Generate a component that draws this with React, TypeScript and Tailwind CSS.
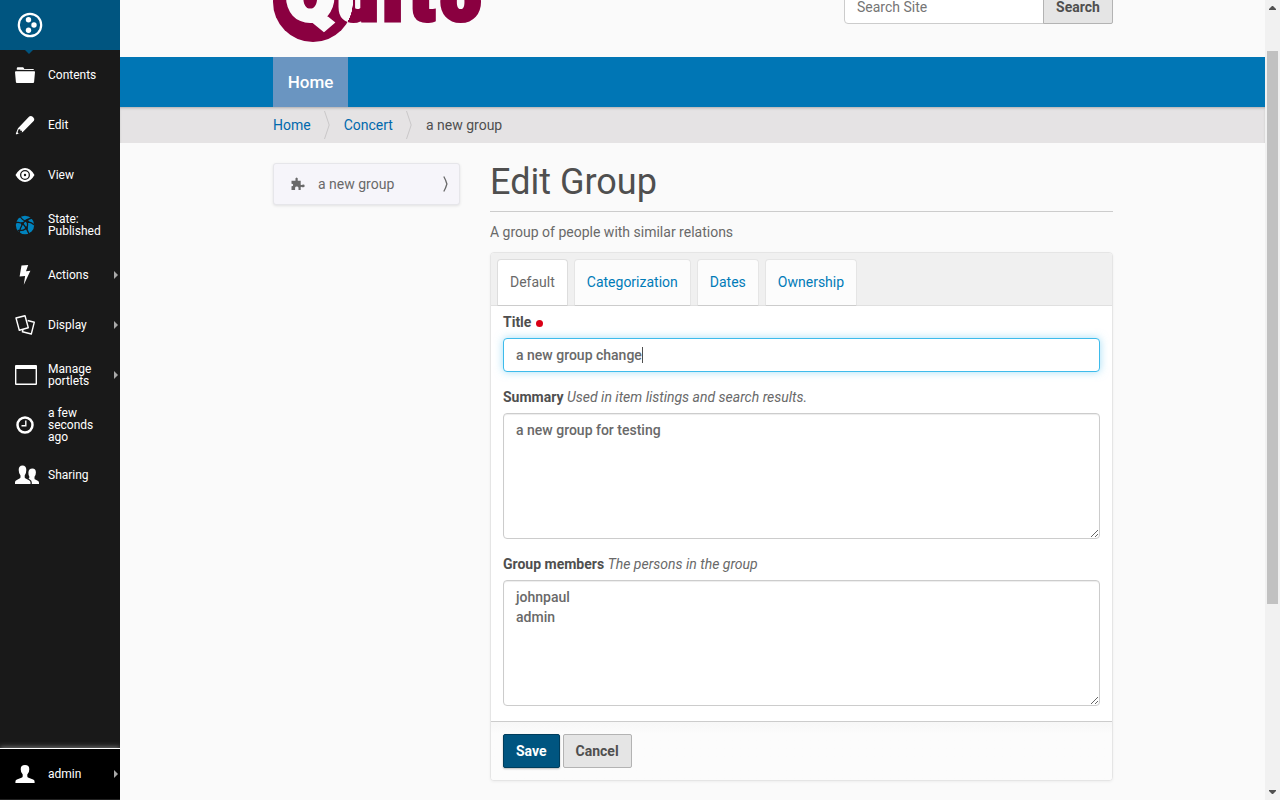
import React from "react";

type IconProps = { children: React.ReactNode; className?: string };

function Icon({ children, className = "text-white" }: IconProps) {
  return (
    <svg width="26" height="24" viewBox="0 0 26 24" fill="currentColor" className={"shrink-0 " + className} aria-hidden="true">
      {children}
    </svg>
  );
}

const FolderIcon = (
  <Icon>
    <path d="M1.800 6.800V5.200q0-1 1-1h5q.7 0 1 .7l.5 1h8.500q1.200 0 1.200 1z" />
    <path d="M1 8.200h18.200q.9 0 .8.900l-.9 9.900q-.1.900-1 .9H1.900q-.9 0-1-.9L0 9.100q0-.9 1-.9z" />
  </Icon>
);
const PencilIcon = (
  <Icon>
    <path fillRule="evenodd" d="M3 15.200 14.200 3.600q1.600-1.500 3.800.4 2.200 2 .9 3.700L7.800 19l-5.900 2.300Q.6 21.600.9 20.400zM3.700 16.300l-1.200 3 1.200 1.200 3.200-1.200.1-1.500-1.600-.1-.2-1.400z" />
  </Icon>
);
const EyeIcon = (
  <Icon>
    <path fillRule="evenodd" d="M.5 12Q4.500 5 10 5t9.500 7q-4 7-9.500 7T.5 12zM10 7a5 5 0 1 0 0 10a5 5 0 1 0 0-10z" />
    <path fillRule="evenodd" d="M10 8.300a3.700 3.700 0 1 0 0 7.400a3.700 3.700 0 1 0 0-7.400zm0 2.500a1.200 1.200 0 1 1 0 2.400a1.200 1.200 0 1 1 0-2.400z" />
  </Icon>
);
const GlobeIcon = (
  <Icon className="text-[#0083be]">
    <circle cx="10" cy="12" r="9.200" />
    <g fill="none" stroke="#191919" strokeWidth="1.300">
      <path d="M5 3Q7 7.500 12 8.500T19.500 12M.8 9.500Q6 8.500 9 12t5 9M17 5Q10 6.500 7.500 11T4 20M12 8.500Q13.500 13 11 15.500T3 17.500" />
    </g>
    <g fill="#191919">
      <circle cx="12.300" cy="8.300" r="1.500" />
      <circle cx="7.300" cy="10.500" r="1.500" />
      <circle cx="11.500" cy="15" r="1.500" />
    </g>
  </Icon>
);
const BoltIcon = (
  <Icon>
    <path d="m6.500 2.500 6.700-.4-2.200 6.200 4.400-.5-6.600 14 1.300-8.900-5.500.7z" />
  </Icon>
);
const DisplayIcon = (
  <Icon>
    <g fill="none" stroke="currentColor" strokeWidth="1.400" strokeLinejoin="round">
      <path d="m1 5 9-2.300 3.300 12.100-9 2.400z" />
      <path d="m12.600 7.500 6.700 1.700-3 11.800-8.900-2.200.6-2.500" />
    </g>
  </Icon>
);
const WindowIcon = (
  <Icon>
    <path fillRule="evenodd" d="M1 2h20q1 0 1 1v18q0 1-1 1H1q-1 0-1-1V3q0-1 1-1zm.4 4v14.600h19.200V6z" />
  </Icon>
);
const ClockIcon = (
  <Icon>
    <circle cx="10" cy="12" r="7.500" fill="none" stroke="currentColor" strokeWidth="2.500" />
    <path d="M10.800 7.500v5.300H6.500" fill="none" stroke="currentColor" strokeWidth="1.400" />
  </Icon>
);
const SharingIcon = (
  <Icon>
    <path d="M7.500 2.600q3.800 0 3.800 4.500 0 3.500-1.600 5.300v1.900q0 .8 1 1.300l3.300 1.600q1.500.7 1.500 2.300V21H0v-1.500q0-1.600 1.400-2.200l3.100-1.700q1-.5 1-1.300v-1.900Q3.700 10.600 3.700 7.100q0-4.500 3.800-4.500z" />
    <path d="M17.400 5.600q3.500 0 3.500 4 0 2.600-1.400 4.200v1.600q0 .7.800 1.100l2.400 1.200q1.300.6 1.300 2V21h-7.200v-1.600q0-2-1.900-3l-1.500-.8q.9-.3.900-1.200v-1q-1-1.600-.9-3.800.2-4 4-4z" />
  </Icon>
);
const UserIcon = (
  <Icon>
    <path d="M10 3q4.300 0 4.300 4.200 0 3.500-2 5.300v1.700q0 1 1.300 1.600l4.500 1.700q1.500.6 1.500 2.200V21H.4v-1.300q0-1.600 1.500-2.200l4.500-1.700q1.300-.6 1.300-1.600v-1.700q-2-1.800-2-5.300Q5.700 3 10 3z" />
  </Icon>
);

const toolbar = [
  { label: "Contents", icon: FolderIcon },
  { label: "Edit", icon: PencilIcon },
  { label: "View", icon: EyeIcon },
  { label: "State: Published", icon: GlobeIcon },
  { label: "Actions", icon: BoltIcon, more: true },
  { label: "Display", icon: DisplayIcon, more: true },
  { label: "Manage portlets", icon: WindowIcon, more: true },
  { label: "a few seconds ago", icon: ClockIcon },
  { label: "Sharing", icon: SharingIcon },
];

function ToolbarLink({ label, icon, more }: { label: string; icon: React.ReactNode; more?: boolean }) {
  return (
    <a href="#" className="flex h-[50px] items-center pl-[15px] pr-[2px] text-xs leading-3 text-white">
      {icon}
      <span className="ml-[7px] w-[58px]">{label}</span>
      {more && (
        <svg width="4" height="8" viewBox="0 0 4 8" className="ml-auto shrink-0" aria-hidden="true">
          <path d="M0 0l4 4-4 4z" fill="#a8a8a8" />
        </svg>
      )}
    </a>
  );
}

function Toolbar() {
  return (
    <aside className="sticky top-0 z-10 flex h-screen w-[120px] shrink-0 flex-col overflow-hidden bg-[#191919]">
      <a href="#" aria-label="Plone" className="relative flex h-[50px] items-center bg-[#005580] pl-[17px]">
        <svg width="26" height="26" viewBox="0 0 26 26" fill="white" aria-hidden="true">
          <circle cx="13" cy="13" r="11.200" fill="none" stroke="white" strokeWidth="2.200" />
          <circle cx="11.500" cy="7.700" r="2.700" />
          <circle cx="17" cy="13" r="2.700" />
          <circle cx="11.500" cy="18.300" r="2.700" />
        </svg>
        <svg width="8" height="4" viewBox="0 0 8 4" className="absolute left-[25px] top-full" aria-hidden="true">
          <path d="M0 0h8L4 4z" fill="#005580" />
        </svg>
      </a>
      <nav>
        {toolbar.map((item) => (
          <ToolbarLink key={item.label} {...item} />
        ))}
      </nav>
      <div className="mt-auto border-b border-t border-b-[#222222] border-t-white bg-black shadow-[0_-1px_5px_#777777]">
        <ToolbarLink label="admin" icon={UserIcon} more />
      </div>
    </aside>
  );
}

function Logo() {
  return (
    <svg width="210" height="43" viewBox="0 0 210 43" role="img" aria-label="Quito" className="font-[Roboto] font-black">
      <defs>
        <radialGradient id="ink" gradientUnits="userSpaceOnUse" cx="40" cy="2" r="40">
          <stop offset="0.990" stopColor="#fafafa" />
          <stop offset="1" stopColor="#8a0040" />
        </radialGradient>
      </defs>
      <circle cx="40" cy="2" r="40" fill="#8a0040" />
      <text x="13 65 110 137 168" y="20" fontSize="70" fill="url(#ink)" stroke="url(#ink)" strokeWidth="5">
        Quito
      </text>
    </svg>
  );
}

function Header() {
  return (
    <header className="h-[57px] overflow-hidden">
      <div className="mx-auto flex max-w-[869px] items-start justify-between pl-[15px] pr-[14px]">
        <Logo />
        <form className="-mt-[10px] flex" onSubmit={(e) => e.preventDefault()}>
          <input
            type="search"
            aria-label="Search Site"
            placeholder="Search Site"
            className="h-[34px] w-[200px] rounded-l-[4px] border border-[#cccccc] bg-white px-3 text-sm placeholder:text-[#757575]"
          />
          <button className="-ml-px h-[34px] w-[70px] rounded-r-[2px] border border-[#b3b3b3] bg-[#e5e5e5] text-sm font-bold text-[#4f4f4f]">
            Search
          </button>
        </form>
      </div>
    </header>
  );
}

function Separator() {
  return (
    <svg width="6" height="28" viewBox="0 0 6 28" className="ml-[13px] mr-[14px]" aria-hidden="true">
      <path d="M.5 0l4.700 14L.5 28" fill="none" stroke="#c9c7c8" />
    </svg>
  );
}

function Breadcrumbs() {
  return (
    <nav aria-label="Breadcrumb" className="bg-[#e5e3e4] shadow-[inset_0_2px_3px_-1px_#00000040]">
      <ol className="mx-auto flex h-[36px] max-w-[869px] items-center pl-[15px] pr-[14px] text-sm text-[#4f4f4f]">
        <li className="flex items-center"><a href="#" className="text-[#0069ad]">Home</a><Separator /></li>
        <li className="flex items-center"><a href="#" className="text-[#0069ad]">Concert</a><Separator /></li>
        <li>a new group</li>
      </ol>
    </nav>
  );
}

const field =
  "block w-full rounded-[4px] border border-[#cccccc] bg-white px-3 text-sm leading-5 font-medium text-[#696969] shadow-[inset_0_1px_1px_#00000013] outline-none";

function Area({ id, label, help, value }: { id: string; label: string; help: string; value: string }) {
  return (
    <div className="mt-[15px]">
      <label htmlFor={id} className="mb-[6px] block leading-5 font-bold text-[#4f4f4f]">
        {label} <span className="font-normal italic text-[#696969]">{help}</span>
      </label>
      <textarea id={id} defaultValue={value} className={field + " h-[126px] resize py-[6px]"} />
    </div>
  );
}

const tabs = ["Default", "Categorization", "Dates", "Ownership"];

function EditForm() {
  return (
    <form
      onSubmit={(e) => e.preventDefault()}
      className="mt-[10px] overflow-hidden rounded-[4px] border border-[#e5e5e5] bg-white shadow-[0_1px_3px_#0000000d]"
    >
      <div role="tablist" className="flex gap-[6px] border-b border-[#e0e0e0] bg-[#f0f0f0] px-[6px] pt-[6px]">
        {tabs.map((tab, i) => (
          <button
            key={tab}
            type="button"
            role="tab"
            aria-selected={i === 0}
            className={
              "-mb-px h-[47px] rounded-t-[4px] border px-3 pb-[2px] " +
              (i === 0
                ? "border-[#dddddd] border-b-[#cccccc] bg-white text-[#696969]"
                : "border-[#e5e5e5] border-b-[#cccccc] bg-[#fcfcfc] text-[#007bb8]")
            }
          >
            {tab}
          </button>
        ))}
      </div>
      <div className="px-3 pb-[15px] pt-[6px]">
        <label htmlFor="title" className="mb-[6px] flex items-center leading-5 font-bold text-[#4f4f4f]">
          Title
          <span className="ml-[5px] mt-[3px] h-[7px] w-[7px] rounded-full bg-[#da0016]" />
        </label>
        <div className="relative">
          <input
            id="title"
            required
            defaultValue="a new group change"
            className="block h-[34px] w-full rounded-[4px] border border-[#3dbbeb] bg-white px-3 text-sm font-medium text-[#696969] shadow-[0_0_8px_#66c8f299] outline-none"
          />
          <span className="absolute left-[139px] top-[9px] h-[16px] w-px bg-[#4f4f4f]" />
        </div>
        <Area id="summary" label="Summary" help="Used in item listings and search results." value="a new group for testing" />
        <Area id="members" label="Group members" help="The persons in the group" value={"johnpaul\nadmin"} />
      </div>
      <div className="flex gap-[3px] border-t border-[#cccccc] bg-linear-to-b from-[#f7f7f7] to-[#fcfcfc] to-20% p-3">
        <button className="h-[34px] rounded-[2px] border border-[#003d5c] bg-[#005580] px-3 font-bold text-white shadow-[0_1px_2px_#00000040]">
          Save
        </button>
        <button type="button" className="h-[34px] rounded-[2px] border border-[#b3b3b3] bg-[#e5e5e5] px-3 font-bold text-[#4f4f4f]">
          Cancel
        </button>
      </div>
    </form>
  );
}

function Scrollbar() {
  return (
    <div aria-hidden="true" className="sticky top-0 flex h-screen w-[15px] shrink-0 flex-col items-center bg-[#f1f1f1]">
      <svg width="7" height="4" viewBox="0 0 7 4" className="mt-[6px]"><path d="M3 0h1l3 3v1H0V3z" fill="#505050" /></svg>
      <div className="my-[5px] w-[11px] flex-1 pt-[36px]">
        <div className="h-[553px] bg-[#c1c1c1]" />
      </div>
      <svg width="7" height="4" viewBox="0 0 7 4" className="mb-[6px]"><path d="M0 0h7v1L4 4H3L0 1z" fill="#505050" /></svg>
    </div>
  );
}

export default function App() {
  return (
    <div className="flex min-h-screen bg-[#fafafa] font-[Roboto,sans-serif] text-sm text-[#696969]">
      <Toolbar />
      <div className="min-w-0 flex-1">
        <Header />
        <nav aria-label="Sections" className="bg-[#0076b5]">
          <div className="mx-auto flex max-w-[869px] pl-[15px] pr-[14px]">
            <a href="#" className="flex h-[50px] w-[75px] items-center justify-center bg-[#6a95c1] text-[17px] font-medium text-white">Home</a>
          </div>
        </nav>
        <Breadcrumbs />
        <div className="mx-auto grid max-w-[869px] grid-cols-[187px_1fr] items-start gap-[30px] pl-[15px] pr-[14px] pt-5">
          <nav aria-label="Navigation">
            <a href="#" className="flex h-[42px] items-center rounded-[3px] border border-[#e6e6ea] bg-[#f6f5fa] pl-[17px] pr-[11px] shadow-[0_1px_3px_#0000001a]">
              <svg width="14" height="14" viewBox="0 0 14 14" fill="#696969" aria-hidden="true">
                <path d="M.5 3.800h3.600q.7 0 .4-.8Q3.900.800 5.600.600q1.700.2 1.100 2.400-.3.800.4.800h2.600v3.700q0 .8.800.5 3-1.100 3.200.9-.2 2-3.200 1-.8-.3-.8.500V13H7.500v-2.200q-.2-1.300-1.700-1.300t-1.700 1.300V13H.5V9.200q1.700 0 1.700-1.200T.5 6.800z" />
              </svg>
              <span className="ml-[13px]">a new group</span>
              <svg width="5" height="16" viewBox="0 0 5 16" className="ml-auto" aria-hidden="true">
                <path d="M.8.500Q2.800 4 3.900 8q-1.100 4-3.100 7.500" fill="none" stroke="#696969" strokeWidth="1.300" />
              </svg>
            </a>
          </nav>
          <main>
            <h1 className="border-b border-[#cccccc] pb-[9px] text-4xl leading-[39px] text-[#4f4f4f]">Edit Group</h1>
            <p className="mt-[10px] leading-5">A group of people with similar relations</p>
            <EditForm />
          </main>
        </div>
      </div>
      <Scrollbar />
    </div>
  );
}
